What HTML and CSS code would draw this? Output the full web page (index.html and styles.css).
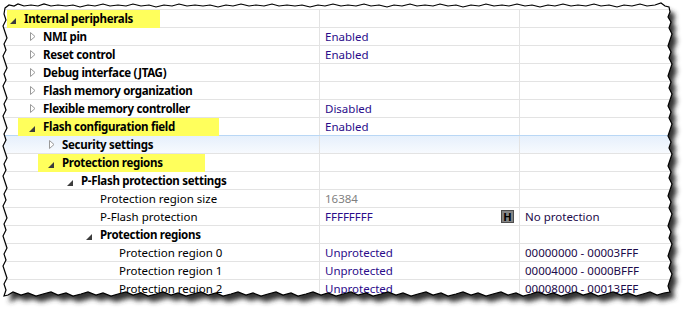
FILE: index.html
```html
<!DOCTYPE html>
<html lang="en">
<head>
    <meta charset="UTF-8">
    <title>Component Inspector</title>
    <link rel="stylesheet" href="styles.css">
</head>
<body>
    <div class="page">
        <svg class="shadow" width="690" height="318">
            <defs>
                <filter id="blur" x="-5%" y="-5%" width="110%" height="110%">
                    <feGaussianBlur stdDeviation="2.5"/>
                </filter>
                <path id="tornPath" d="M5,8 L9,5 L14,6 L18,4 L24,6 L31,5 L38,6 L44,4 L51,6 L58,5 L66,6 L73,5 L80,7 L88,5 L95,6 L103,4 L110,6 L118,5 L126,6 L133,4 L141,6 L149,5 L156,7 L164,5 L172,6 L179,4 L187,6 L195,5 L203,6 L210,5 L218,7 L226,5 L233,6 L241,4 L249,6 L256,5 L264,6 L272,4 L279,6 L287,5 L295,6 L302,5 L310,7 L318,5 L325,6 L333,4 L341,6 L348,5 L356,6 L364,4 L371,6 L379,5 L387,7 L394,5 L402,6 L410,4 L417,6 L425,5 L433,6 L440,4 L448,6 L456,5 L463,7 L471,5 L479,6 L486,4 L494,6 L502,5 L509,6 L517,4 L525,6 L532,5 L540,7 L548,5 L555,6 L563,4 L571,6 L578,5 L586,6 L594,4 L601,6 L609,5 L617,7 L624,5 L632,6 L640,4 L647,6 L655,5 L661,3 L665,6 L669,7 L670,12 L668,17 L671,22 L669,28 L672,34 L670,40 L668,46 L671,52 L669,58 L672,64 L670,70 L668,76 L671,82 L669,88 L672,94 L670,100 L668,106 L671,112 L669,118 L672,124 L670,130 L668,136 L671,142 L669,148 L672,154 L670,160 L668,166 L671,172 L669,178 L672,184 L670,190 L668,196 L671,202 L669,208 L672,214 L670,220 L668,226 L671,232 L669,238 L672,244 L670,250 L668,256 L671,262 L669,268 L672,274 L670,280 L668,286 L670,292 L664,293 L657,295 L650,292 L643,294 L636,296 L628,293 L621,295 L613,292 L606,294 L598,296 L591,293 L583,295 L576,292 L568,294 L561,296 L553,293 L546,295 L538,292 L531,294 L523,296 L516,293 L508,295 L501,292 L493,294 L486,296 L478,293 L471,295 L463,292 L456,294 L448,296 L441,293 L433,295 L426,292 L418,294 L411,296 L403,293 L396,295 L388,292 L381,294 L373,296 L366,293 L358,295 L351,292 L343,294 L336,296 L328,293 L321,295 L313,292 L306,294 L298,296 L291,293 L283,295 L276,292 L268,294 L261,296 L253,293 L246,295 L238,292 L231,294 L223,296 L216,293 L208,295 L201,292 L193,294 L186,296 L178,293 L171,295 L163,292 L156,294 L148,296 L141,293 L133,295 L126,292 L118,294 L111,296 L103,293 L96,295 L88,292 L81,294 L73,296 L66,293 L58,295 L51,292 L43,294 L36,296 L28,293 L21,295 L13,292 L8,295 L4,296 L6,290 L4,284 L7,278 L5,272 L3,266 L6,260 L4,254 L7,248 L5,242 L3,236 L6,230 L4,224 L7,218 L5,212 L3,206 L6,200 L4,194 L7,188 L5,182 L3,176 L6,170 L4,164 L7,158 L5,152 L3,146 L6,140 L4,134 L7,128 L5,122 L3,116 L6,110 L4,104 L7,98 L5,92 L3,86 L6,80 L4,74 L7,68 L5,62 L3,56 L6,50 L4,44 L7,38 L5,32 L3,26 L6,20 L4,14 Z"/>
                <clipPath id="torn">
                    <use href="#tornPath"/>
                </clipPath>
            </defs>
            <use href="#tornPath" transform="translate(5,6)" fill="#333" filter="url(#blur)"/>
        </svg>

        <div class="sheet">
            <div class="tree">
                <div class="row">
                    <div class="name l0"><span class="mark mark-top"><span class="twisty open"><svg width="6" height="6"><path d="M6 0V6H0Z"/></svg></span><b>Internal peripherals</b></span></div>
                    <div class="value"></div>
                    <div class="info"></div>
                </div>
                <div class="row">
                    <div class="name l1"><span class="twisty closed"><svg width="6" height="9"><path d="M0.5 0.5L5 4.5L0.5 8.5Z"/></svg></span><b>NMI pin</b></div>
                    <div class="value">Enabled</div>
                    <div class="info"></div>
                </div>
                <div class="row">
                    <div class="name l1"><span class="twisty closed"><svg width="6" height="9"><path d="M0.5 0.5L5 4.5L0.5 8.5Z"/></svg></span><b>Reset control</b></div>
                    <div class="value">Enabled</div>
                    <div class="info"></div>
                </div>
                <div class="row">
                    <div class="name l1"><span class="twisty closed"><svg width="6" height="9"><path d="M0.5 0.5L5 4.5L0.5 8.5Z"/></svg></span><b>Debug interface (JTAG)</b></div>
                    <div class="value"></div>
                    <div class="info"></div>
                </div>
                <div class="row">
                    <div class="name l1"><span class="twisty closed"><svg width="6" height="9"><path d="M0.5 0.5L5 4.5L0.5 8.5Z"/></svg></span><b>Flash memory organization</b></div>
                    <div class="value"></div>
                    <div class="info"></div>
                </div>
                <div class="row">
                    <div class="name l1"><span class="twisty closed"><svg width="6" height="9"><path d="M0.5 0.5L5 4.5L0.5 8.5Z"/></svg></span><b>Flexible memory controller</b></div>
                    <div class="value">Disabled</div>
                    <div class="info"></div>
                </div>
                <div class="row">
                    <div class="name l1"><span class="mark mark-field"><span class="twisty open"><svg width="6" height="6"><path d="M6 0V6H0Z"/></svg></span><b>Flash configuration field</b></span></div>
                    <div class="value">Enabled</div>
                    <div class="info"></div>
                </div>
                <div class="row selected">
                    <div class="name l2"><span class="twisty closed"><svg width="6" height="9"><path d="M0.5 0.5L5 4.5L0.5 8.5Z"/></svg></span><b>Security settings</b></div>
                    <div class="value"></div>
                    <div class="info"></div>
                </div>
                <div class="row">
                    <div class="name l2"><span class="mark mark-regions"><span class="twisty open"><svg width="6" height="6"><path d="M6 0V6H0Z"/></svg></span><b>Protection regions</b></span></div>
                    <div class="value"></div>
                    <div class="info"></div>
                </div>
                <div class="row">
                    <div class="name l3"><span class="twisty open"><svg width="6" height="6"><path d="M6 0V6H0Z"/></svg></span><b>P-Flash protection settings</b></div>
                    <div class="value"></div>
                    <div class="info"></div>
                </div>
                <div class="row">
                    <div class="name l4"><span class="twisty"></span>Protection region size</div>
                    <div class="value readonly">16384</div>
                    <div class="info"></div>
                </div>
                <div class="row">
                    <div class="name l4"><span class="twisty"></span>P-Flash protection</div>
                    <div class="value">FFFFFFFF<span class="hint">H</span></div>
                    <div class="info">No protection</div>
                </div>
                <div class="row">
                    <div class="name l4"><span class="twisty open"><svg width="6" height="6"><path d="M6 0V6H0Z"/></svg></span><b>Protection regions</b></div>
                    <div class="value"></div>
                    <div class="info"></div>
                </div>
                <div class="row">
                    <div class="name l5"><span class="twisty"></span>Protection region 0</div>
                    <div class="value">Unprotected</div>
                    <div class="info">00000000 - 00003FFF</div>
                </div>
                <div class="row">
                    <div class="name l5"><span class="twisty"></span>Protection region 1</div>
                    <div class="value">Unprotected</div>
                    <div class="info">00004000 - 0000BFFF</div>
                </div>
                <div class="row">
                    <div class="name l5"><span class="twisty"></span>Protection region 2</div>
                    <div class="value">Unprotected</div>
                    <div class="info">00008000 - 00013FFF</div>
                </div>
            </div>
        </div>

        <svg class="edge" width="690" height="318">
            <use href="#tornPath" fill="none" stroke="#000" stroke-width="1.2"/>
        </svg>
    </div>
</body>
</html>
```

FILE: styles.css
```css
body {
    margin: 0;
    background-color: #fff;
    font-family: "Noto Sans", "Open Sans", sans-serif;
    font-size: 11.5px;
    color: #000;
}

.page {
    position: relative;
    width: 690px;
    height: 318px;
    overflow: hidden;
}

.shadow,
.edge {
    position: absolute;
    top: 0;
    left: 0;
}

.shadow {
    z-index: 0;
}

.edge {
    z-index: 2;
}

.sheet {
    position: relative;
    z-index: 1;
    height: 318px;
    padding-top: 9px;
    box-sizing: border-box;
    background-color: #fff;
    clip-path: url(#torn);
}

.tree {
    border-top: 1px solid #e3e3e3;
}

.row {
    display: flex;
    height: 18px;
    box-sizing: border-box;
    border-bottom: 1px solid #e3e3e3;
    line-height: 17px;
    white-space: nowrap;
}

/* selected row: light blue band */
.row.selected {
    margin-top: -1px;
    height: 19px;
    border-top: 1px solid #b9d7f5;
    background: linear-gradient(#e6f0fc, #f7fafe);
}

.name {
    display: flex;
    align-items: flex-start;
    width: 320px;
    flex: none;
    box-sizing: border-box;
    border-right: 1px solid #e3e3e3;
}

.name b {
    font-weight: bold;
    letter-spacing: -0.3px;
}

.l0 { padding-left: 5px; }
.l1 { padding-left: 24px; }
.l2 { padding-left: 43px; }
.l3 { padding-left: 62px; }
.l4 { padding-left: 81px; }
.l5 { padding-left: 100px; }

.twisty {
    display: block;
    width: 19px;
    height: 17px;
    flex: none;
}

.twisty svg {
    display: block;
}

.twisty.open svg {
    margin: 8px 0 0 5px;
    fill: #3c3c3c;
}

.twisty.closed svg {
    margin: 4px 0 0 6px;
    fill: #fff;
    stroke: #9a9a9a;
}

/* yellow marker highlights */
.mark {
    display: flex;
    height: 18px;
    background-color: #ffff5c;
}

.mark-top {
    margin-left: 2px;
    padding-left: 0;
    padding-right: 27px;
}

.mark-top .twisty {
    width: 17px;
}

.mark-top .twisty svg {
    margin-left: 3px;
}

.mark-field {
    margin-left: -6px;
    padding-left: 6px;
    padding-right: 44px;
}

.mark-regions {
    margin-left: -5px;
    padding-left: 5px;
    padding-right: 42px;
}

.value {
    display: flex;
    justify-content: space-between;
    width: 200px;
    flex: none;
    box-sizing: border-box;
    padding-left: 5px;
    padding-right: 5px;
    border-right: 1px solid #e3e3e3;
    color: #2a0c8a;
}

.value.readonly {
    color: #7f7f7f;
}

.hint {
    width: 13px;
    height: 13px;
    margin-top: 2px;
    box-sizing: border-box;
    border: 1px solid #4d4d4d;
    background-color: #858585;
    color: #000;
    font-weight: bold;
    font-size: 11px;
    line-height: 11px;
    text-align: center;
}

.info {
    flex: 1;
    padding-left: 5px;
    color: #1c0a4a;
}
```
